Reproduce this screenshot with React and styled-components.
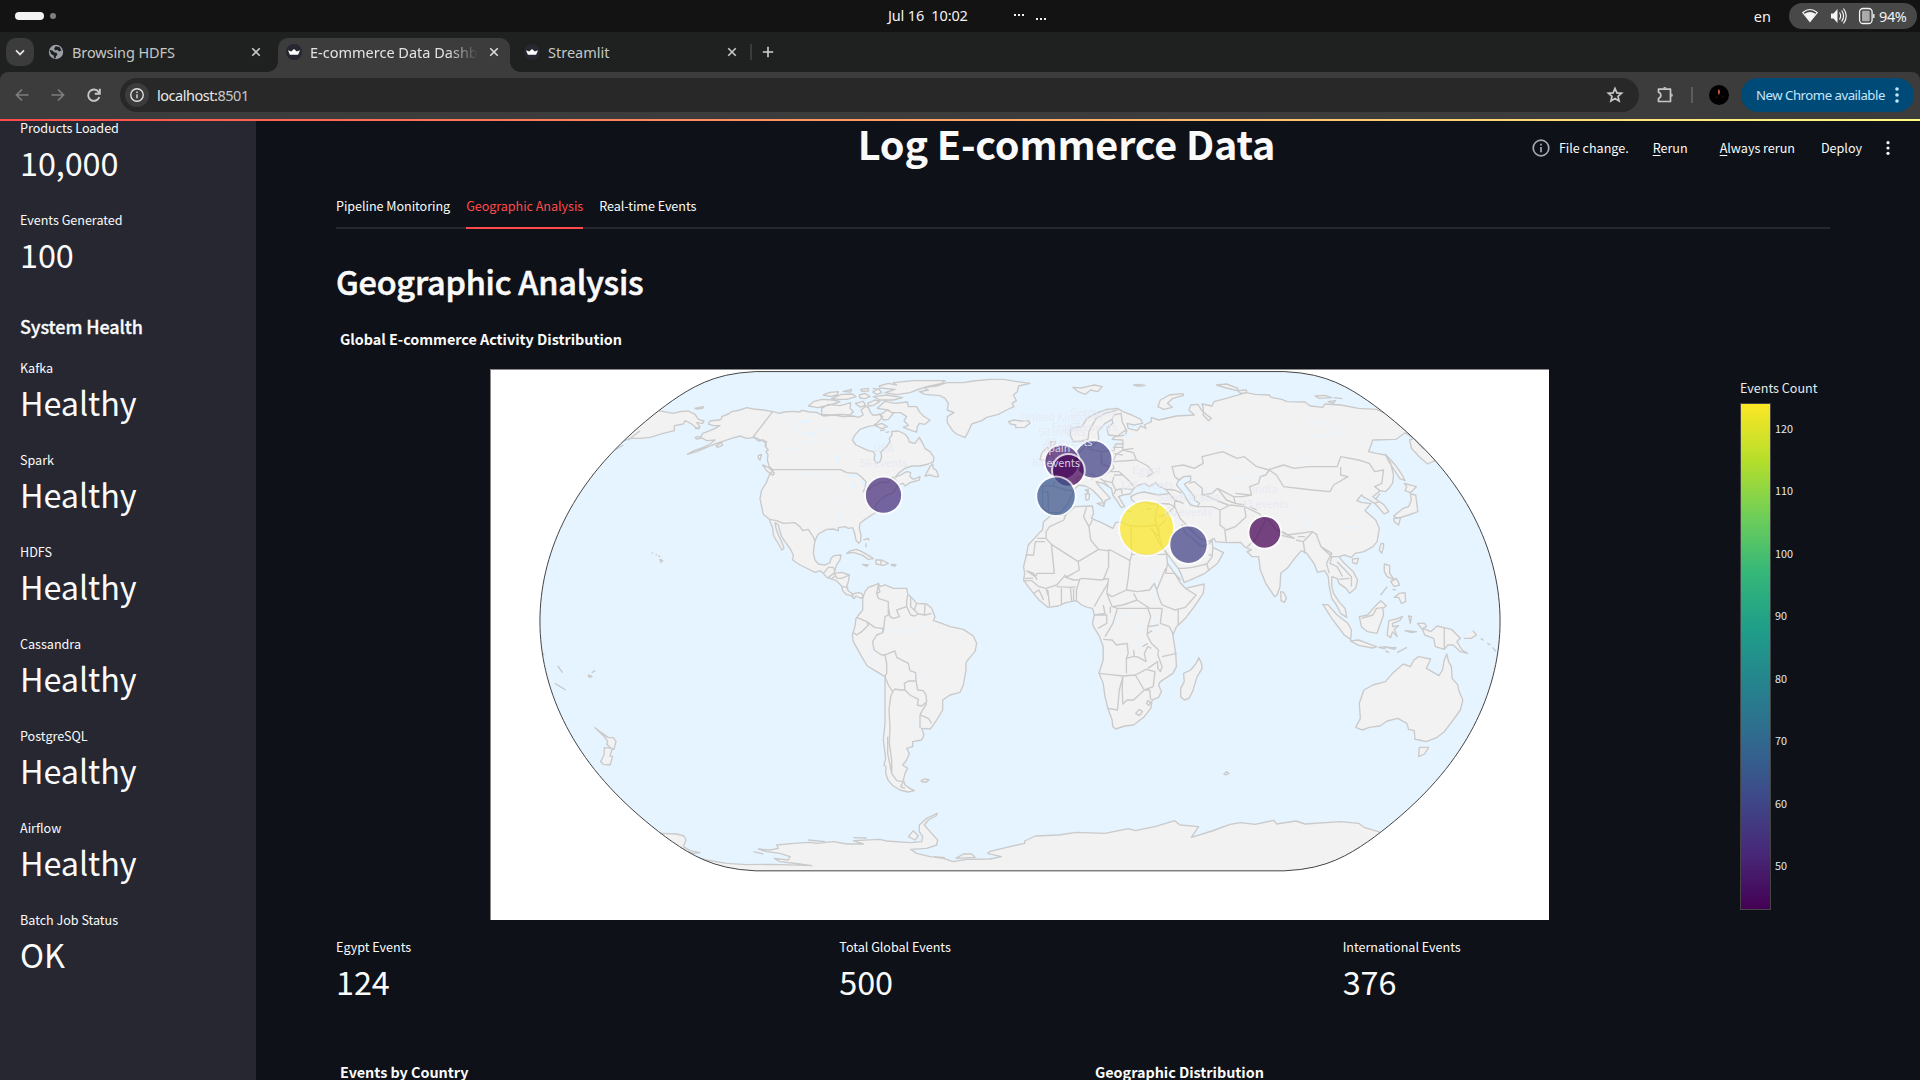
import React from "react";
import styled, { createGlobalStyle } from "styled-components";

const GlobalStyle = createGlobalStyle`
  * { box-sizing: border-box; }
  html, body { margin: 0; padding: 0; background: #0e1117; overflow: hidden; }
`;

const SOURCE = `"Noto Sans CJK JP", "Noto Sans CJK SC", "Noto Sans", sans-serif`;
const SYSTEM = `"Noto Sans", "Open Sans", sans-serif`;

/* ---------- window frame ---------- */

const Screen = styled.div`
  width: 1920px;
  height: 1080px;
  display: flex;
  flex-direction: column;
  overflow: hidden;
  background: #0e1117;
  color: #fafafa;
  font-family: ${SOURCE};
`;

const SystemBar = styled.header`
  flex: none;
  height: 32px;
  display: grid;
  grid-template-columns: 888px 1fr auto;
  align-items: center;
  background: #131313;
  color: #f2f2f2;
  font: 400 14.5px/32px ${SYSTEM};
`;

const Workspaces = styled.div`
  display: flex;
  align-items: center;
  gap: 6px;
  padding-left: 15px;
`;

const WorkspacePill = styled.span`
  width: ${(p) => (p.$active ? 29 : 6)}px;
  height: ${(p) => (p.$active ? 8 : 6)}px;
  border-radius: 4px;
  background: ${(p) => (p.$active ? "#f2f2f2" : "#808080")};
`;

const Clock = styled.div`
  display: flex;
  align-items: center;
  white-space: pre;
  height: 32px;
  padding-bottom: 3px;
  letter-spacing: -0.15px;
`;

const Dots = styled.svg`
  margin: 2px 0 0 46px;
`;

const StatusArea = styled.div`
  display: flex;
  align-items: center;
  gap: 18px;
  padding-right: 3px;
`;

const StatusPill = styled.div`
  width: 128px;
  height: 26px;
  border-radius: 13px;
  background: #484848;
  display: flex;
  align-items: center;
  padding-left: 13px;
  line-height: 26px;
  letter-spacing: -0.4px;
`;

const StatusIcons = styled.svg`
  margin-right: -13px;
`;

const TabStrip = styled.div`
  flex: none;
  height: 40px;
  display: flex;
  align-items: flex-end;
  background: #1f2120;
  font: 400 14.5px/28px ${SYSTEM};
`;

const TabSearch = styled.div`
  width: 28px;
  height: 28px;
  margin: 0 6px 6px;
  border-radius: 10px;
  background: #3c3c3c;
  display: grid;
  place-items: center;
`;

const Tab = styled.div`
  position: relative;
  width: 232px;
  height: 34px;
  margin-right: ${(p) => p.$gap || 0}px;
  padding: 0 8px 6px;
  display: flex;
  align-items: center;
  gap: 8px;
  border-radius: 10px 10px 0 0;
  background: ${(p) => (p.$active ? "#3c3c3c" : "transparent")};
  color: ${(p) => (p.$active ? "#e3e3e3" : "#c4c7c5")};

  &::before, &::after {
    content: "";
    display: ${(p) => (p.$active ? "block" : "none")};
    position: absolute;
    bottom: 0;
    width: 10px;
    height: 10px;
  }
  &::before {
    left: -10px;
    background: radial-gradient(circle at 0 0, transparent 9.5px, #3c3c3c 10px);
  }
  &::after {
    right: -10px;
    background: radial-gradient(circle at 100% 0, transparent 9.5px, #3c3c3c 10px);
  }
`;

const TabTitle = styled.span`
  flex: 1;
  overflow: hidden;
  white-space: nowrap;
  padding-bottom: 1px;
  letter-spacing: ${(p) => p.$spacing || 0}px;
  mask-image: ${(p) => (p.$fade ? "linear-gradient(90deg, #000 82%, transparent 100%)" : "none")};
`;

const StripDivider = styled.span`
  width: 2px;
  height: 16px;
  margin: 0 8px 12px 2px;
  background: #3c3c3c;
`;

const PlusBox = styled.span`
  height: 34px;
  padding-bottom: 6px;
  display: flex;
  align-items: center;
`;

const NavBar = styled.div`
  flex: none;
  height: 47px;
  background: #3c3c3c;
  border-radius: 8px 8px 0 0;
  box-shadow: 0 -8px 0 0 #1f2120;
  display: flex;
  align-items: center;
  padding: 0 6px 1px 12px;
  font: 400 14.5px/34px ${SYSTEM};
`;

const TabRow = styled.div`
  flex: none;
  position: relative;
  background: #1f2120;
  & > ${TabStrip} { position: relative; z-index: 1; }
  & > ${NavBar} { box-shadow: none; }
`;

const NavButtons = styled.div`
  width: 108px;
  display: flex;
  gap: 16px;
`;

const AddressBar = styled.div`
  width: 1519px;
  height: 34px;
  border-radius: 17px;
  background: #282828;
  display: flex;
  align-items: center;
  padding: 0 14px 0 5px;
  color: #c7c7c7;
`;

const InfoChip = styled.span`
  width: 24px;
  height: 24px;
  margin-right: 8px;
  border-radius: 50%;
  background: #3c3c3c;
  display: grid;
  place-items: center;
`;

const Url = styled.span`
  flex: 1;
  padding-bottom: 1px;
  letter-spacing: -0.47px;
  b { font-weight: 400; color: #e8e8e8; }
`;

const PuzzleIcon = styled.svg`
  margin-left: 16px;
`;

const BarDivider = styled.span`
  width: 2px;
  height: 16px;
  margin: 0 16px;
  background: #5c5c5c;
`;

const UpdateButton = styled.div`
  width: 173px;
  height: 34px;
  margin-left: auto;
  border-radius: 17px;
  background: #004a77;
  color: #c2e7ff;
  display: flex;
  align-items: center;
  justify-content: space-between;
  padding: 0 15px;
  font-size: 13.2px;
  letter-spacing: -0.48px;
`;

const Decoration = styled.div`
  flex: none;
  height: 2px;
  background: linear-gradient(90deg, #ff4b4b, #fffd80);
`;

/* ---------- app ---------- */

const AppBody = styled.div`
  position: relative;
  flex: 1;
  min-height: 0;
  display: flex;
  overflow: hidden;
`;

const Sidebar = styled.aside`
  width: 256px;
  flex: none;
  overflow: hidden;
  background: #262730;
  padding-left: 20px;
`;

const SidebarStack = styled.div`
  margin-top: -5px;
  display: flex;
  flex-direction: column;
  gap: 20px;
`;

const SidebarHeading = styled.h3`
  margin: 0;
  padding-top: 18px;
  height: 36px;
  font: 500 18px/16px ${SOURCE};
  letter-spacing: -0.12px;
  -webkit-text-stroke: 0.3px currentColor;
`;

const MetricBox = styled.div`
  height: 72px;
  white-space: nowrap;
`;

const MetricLabel = styled.div`
  font-size: 12.6px;
  line-height: 24px;
  letter-spacing: -0.02px;
`;

const MetricValue = styled.div`
  font-size: 32.4px;
  line-height: 44px;
  letter-spacing: -0.08px;
`;

const Main = styled.main`
  flex: 1;
  min-width: 0;
  padding: 0 90px 0 80px;
`;

const PageTitle = styled.h1`
  margin: 0;
  height: 60px;
  text-align: center;
  font: 700 39.6px/44px ${SOURCE};
  letter-spacing: -0.18px;
  text-indent: -33px;
`;

const Tabs = styled.nav`
  height: 48px;
  display: flex;
  gap: 16px;
  border-bottom: 2px solid #262730;
`;

const TabLabel = styled.span`
  height: 48px;
  padding-top: 13px;
  font-size: 12.6px;
  line-height: 24px;
  letter-spacing: -0.05px;
  color: ${(p) => (p.$active ? "#ff4b4b" : "#fafafa")};
  border-bottom: 2px solid ${(p) => (p.$active ? "#ff4b4b" : "transparent")};
`;

const Heading = styled.h2`
  margin: 30px 0 0;
  height: 48px;
  font: 500 32.4px/44px ${SOURCE};
  letter-spacing: -0.2px;
  -webkit-text-stroke: 0.6px currentColor;
`;

const ChartTitle = styled.div`
  padding-left: 4px;
  font: 700 14.4px/24px ${SOURCE};
  letter-spacing: -0.03px;
`;

const ChartTitleRow = styled.div`
  height: 62px;
  padding-top: 20px;
`;

const ChartRow = styled.div`
  height: 551px;
  padding-left: 154px;
  display: flex;
`;

const MapFrame = styled.svg`
  flex: none;
  display: block;
  background: #fff;
  border-top: 1px solid #8a8a8a;
  border-left: 1px solid #8a8a8a;
`;

const MarkerLabel = styled.text`
  font: 400 10.8px ${SOURCE};
  fill: #e6e8f2;
  fill-opacity: 0.88;
  text-anchor: middle;
`;

const Legend = styled.div`
  margin-left: 191px;
  padding-top: 7px;
`;

const LegendTitle = styled.div`
  font-size: 12.6px;
  line-height: 24px;
  height: 27px;
  color: #e6eaf1;
`;

const Scale = styled.div`
  display: flex;
  gap: 4px;
`;

const ScaleBar = styled.div`
  width: 31px;
  height: 507px;
  border: 1px solid #444;
  background: linear-gradient(to top, #440154 0%, #482878 11%, #3e4989 22%, #31688e 33%, #26828e 44%, #1f9e89 55.5%, #35b779 66.6%, #6ece58 77.7%, #b5de2b 88.8%, #fde725 100%);
`;

const ScaleTicks = styled.div`
  height: 451px;
  margin-top: 18px;
  display: flex;
  flex-direction: column;
  justify-content: space-between;
  font-size: 10.8px;
  line-height: 14px;
  color: #e6eaf1;
`;

const MetricRow = styled.div`
  display: grid;
  grid-template-columns: repeat(3, 1fr);
  gap: 16px;
  padding-top: 15px;
  height: 140px;
`;

const BottomRow = styled.div`
  display: grid;
  grid-template-columns: 1fr 1fr;
  gap: 16px;
`;

const AppToolbar = styled.div`
  position: absolute;
  top: 14px;
  right: 30px;
  height: 26px;
  display: flex;
  align-items: center;
  font-size: 12.6px;
  line-height: 26px;
  letter-spacing: -0.02px;
  u { text-underline-offset: 2px; }
`;

const ToolbarItem = styled.span`
  margin-left: ${(p) => p.$left}px;
`;

const ToolbarMenu = styled.span`
  display: flex;
  align-items: center;
  margin-left: 24px;
`;

/* ---------- icons ---------- */

const Stroke = ({ size = 20, color = "#c7c7c7", width = 1.7, children }) => (
  <svg width={size} height={size} viewBox="0 0 20 20" fill="none" stroke={color} strokeWidth={width}>
    {children}
  </svg>
);

const Close = ({ color = "#dcdcdc" }) => (
  <Stroke size={16} color={color} width={2}>
    <path d="M5.3 5.3l9.4 9.4M14.7 5.3l-9.4 9.4" />
  </Stroke>
);

const Globe = () => (
  <svg width="16" height="16" viewBox="0 0 16 16">
    <circle cx="8" cy="8" r="7.2" fill="#9aa0a6" />
    <path d="M1.500 6l3 .6 1.500 1.600 2.600.6.8 2-1.500 1.400-.3 2-1.500.2-.4-2.800L3 10zM7.500 2.200l4 .8 2 3.600-2.400.8-1.600-1.400-2.600.2-.8-1.500z" fill="#1f2120" />
  </svg>
);

const Crown = () => (
  <svg width="16" height="16" viewBox="0 0 16 16">
    <circle cx="8" cy="8" r="8" fill="#262730" />
    <path d="M2 6.200l3.200 1.300L8 5l2.800 2.500L14 6.200l-1.900 4.600H3.900z" fill="#fff" />
  </svg>
);

const InfoIcon = ({ size, color }) => (
  <Stroke size={size} color={color}>
    <circle cx="10" cy="10" r="7.800" />
    <path d="M10 9v5.200M10 5.700v1.900" />
  </Stroke>
);

const Kebab = ({ color, height = 18 }) => (
  <svg width="4" height={height} viewBox="0 0 4 18" fill={color}>
    <circle cx="2" cy="3" r="1.800" />
    <circle cx="2" cy="9" r="1.800" />
    <circle cx="2" cy="15" r="1.800" />
  </svg>
);

const Puzzle = () => (
  <PuzzleIcon width="20" height="20" viewBox="0 0 20 20" fill="none" stroke="#c7c7c7" strokeWidth="1.700">
    <path d="M3.500 4.200H15.500V16.500H3.500V13.500C6.600 12.500 6.600 8.200 3.500 7.200z" strokeLinejoin="round" />
    <path d="M8 3.600a1.800 1.600 0 0 1 3.600 0zM16.200 8.500a1.600 1.800 0 0 1 0 3.600z" fill="#c7c7c7" stroke="none" />
  </PuzzleIcon>
);

/* ---------- map ---------- */

const CENTER = { x: 1020, y: 621.2 };
const SCALE = 175.5;

function naturalEarth(lambda, phi) {
  const p2 = phi * phi;
  const p4 = p2 * p2;
  return [
    CENTER.x + SCALE * lambda * (0.8707 - 0.131979 * p2 + p4 * (-0.013791 + p4 * (0.003971 * p2 - 0.001529 * p4))),
    CENTER.y - SCALE * phi * (1.007226 + p2 * (0.015085 + p4 * (-0.044475 + 0.028874 * p2 - 0.005916 * p4))),
  ];
}

const sphere = (() => {
  const pts = [];
  for (let i = -90; i <= 90; i += 2) pts.push(naturalEarth(-Math.PI, (i * Math.PI) / 180));
  for (let i = 90; i >= -90; i -= 2) pts.push(naturalEarth(Math.PI, (i * Math.PI) / 180));
  return "M" + pts.map((p) => p.map((n) => n.toFixed(2)).join(",")).join("L") + "Z";
})();

const WEST_LAND = `
M725,170 L745,162 755,155 780,150 800,143 820,147 850,150 878,155 900,160 912,156 940,154 960,156 965,151 990,156 1010,157 1030,168 1060,165 1090,170 1120,168 1135,172 1150,165 1143,150 1155,140 1165,142 1170,155 1178,165 1190,165 1200,162 1208,170 1200,180 1190,190 1180,197 1165,199 1140,208 1125,225 1117,240 1128,255 1150,265 1165,272 1180,275 1185,285 1182,298 1190,310 1200,305 1205,290 1203,275 1218,262 1230,245 1228,235 1236,225 1235,215 1255,213 1275,222 1285,235 1288,246 1305,250 1318,232 1328,250 1335,265 1350,275 1362,292 1360,305 1345,312 1320,318 1295,318 1275,325 1255,340 1245,352 1262,345 1280,335 1292,337 1290,350 1300,358 1320,350 1318,360 1290,368 1275,378 1270,370 1262,372 1250,380 1240,398 1215,408 1195,425 1185,440 1192,455 1175,465 1150,482 1140,490 1138,505 1143,525 1142,543 1136,550 1128,540 1124,520 1118,503 1105,505 1095,500 1075,503 1075,512 1060,507 1040,508 1015,522 1005,542 1002,560 1000,580 1005,600 1015,612 1035,615 1050,608 1053,595 1062,587 1083,585 1080,600 1070,615 1065,630 1062,640 1085,637 1108,645 1105,665 1100,680 1105,692 1118,702 1135,698 1145,700 1150,712 1140,714 1128,708 1122,716 1112,706 1100,704 1088,692 1085,678 1070,663 1055,657 1040,652 1030,640 1020,632 1005,637 985,627 960,615 938,600 940,585 930,565 915,545 905,530 900,515 895,495 885,488 888,505 895,525 905,545 912,565 905,570 895,550 888,540 880,525 878,505 872,490 868,478 850,463 845,440 840,415 845,390 858,370 866,350 868,345 880,330 868,320 862,300 864,285 858,275 865,270 855,258 860,245 840,240 825,232 800,235 780,228 755,235 735,242 710,250 680,262 650,275 622,283 640,273 670,262 690,252 705,240 680,242 662,232 668,220 690,212 705,205 720,197 700,197 685,192 690,183 713,180 720,180 725,175z
M1100,580 L1112,572 1130,568 1150,577 1180,596 1165,598 1148,586 1120,577z
M1187,600 L1205,600 1225,610 1210,616 1188,612z
M1148,613 L1165,615 1160,619z M1234,613 L1248,614 1246,618 1235,617z
M1150,540 L1165,535 1167,542 M1158,550 L1158,562
M848,315 L865,322 883,340 878,346 860,332z M835,287 L845,283 840,300 835,295z
M1335,348 L1350,320 1358,312 1360,325 1370,332 1376,350 1365,350 1350,345z
M645,233 L655,229 662,235 650,237z M708,257 L725,248 728,256 712,262z
M645,145 L670,140 668,145 650,147z
M500,160 L535,152 580,160 600,155 625,153 645,163 655,178 672,183 668,190 650,188 660,200 650,205 635,192 615,182 610,192 583,197 583,212 550,220 510,232 480,235 450,235 430,243 380,240z
M445,240 L480,212 M405,270 L430,255
M645,206 L660,206
M1025,145 L1045,133 1080,137 1105,130 1112,128 1110,145 1120,155 1110,165 1080,163 1050,165 1025,163z
M985,138 L1000,125 1025,118 1060,120 1080,125 1060,132 1035,138 1015,143z
M1030,105 L1050,97 1075,95 1072,105 1050,109z M1090,94 L1115,88 1112,96z
M1055,115 L1085,103 1118,102 1128,110 1100,118 1075,118z
M1138,105 L1155,100 1170,110 1155,116 1140,114z M1142,88 L1165,85 1165,93 1145,94z
M1126,130 L1150,124 1157,136 1140,141z M1163,130 L1185,120 1200,124 1180,136 1165,138z
M1180,110 L1220,105 1268,113 1240,120 1200,120z M1178,96 L1195,86 1205,98 1190,103z M1178,85 L1195,88
M1198,78 L1225,70 1250,75 1240,68 1300,62 1395,62 1385,70 1340,80 1310,90 1290,98 1250,104 1215,98 1245,88 1200,84z
M1192,145 L1215,124 1245,130 1282,126 1285,140 1310,140 1318,155 1330,168 1350,180 1335,193 1318,190 1312,200 1310,216 1295,212 1270,202 1285,196 1272,182 1280,170 1262,158 1235,158 1225,150z
M1200,165 L1222,150 1240,160 1225,178 1210,180z
M1185,197 L1205,190 1222,200 1205,206z M1200,212 L1215,210 M1218,218 L1227,215
M1318,95 L1345,90 1330,83 1370,78 1400,68 1450,68 1480,63 1530,58 1570,58 1607,64 1650,70 1616,78 1612,95 1600,105 1609,122 1596,130 1602,140 1580,150 1555,163 1520,172 1505,182 1475,192 1465,215 1455,233 1430,222 1418,212 1402,188 1402,170 1422,158 1402,150 1405,130 1395,115 1380,107 1335,103z
M1148,715 L1155,695 1165,682 1185,675 1195,670 1200,680 1215,675 1240,685 1280,685 1283,702 1300,718 1310,730 1340,732 1355,745 1365,770 1360,782 1385,790 1410,800 1450,808 1480,828 1490,850 1485,875 1467,895 1458,908 1458,930 1450,975 1440,997 1410,1005 1388,1020 1388,1050 1370,1080 1358,1098 1350,1107 1325,1105 1332,1125 1325,1140 1298,1145 1298,1160 1280,1165 1288,1180 1280,1200 1268,1215 1283,1225 1275,1240 1270,1260 1275,1275 1290,1285 1303,1292 1285,1296 1260,1290 1240,1278 1225,1262 1217,1240 1218,1220 1212,1215 1217,1195 1210,1140 1215,1090 1215,950 1190,935 1162,918 1145,890 1120,845 1117,825 1125,800 1128,775 1148,750z
M1323,1262 L1335,1257 1347,1260 1340,1266 1327,1266z
M515,578 L519,580 M527,583 L531,586 M535,588 L541,590 M540,598 L548,602 542,607z
M233,918 L248,938 M225,970 L257,990 M325,945 L336,949 328,952z M335,938 L346,932 M190,880 L192,885
M345,1103 L360,1115 385,1133 400,1133 408,1145 402,1168 392,1165 380,1152 383,1145 375,1132z
M373,1163 L397,1165 390,1188 398,1190 390,1215 370,1213 362,1205 372,1185z
M500,1420 L545,1420 590,1422 612,1428 618,1440 610,1460 630,1472 660,1478 640,1480 600,1470 560,1500z
M600,1480 L680,1500 740,1510 800,1514 880,1513 995,1517 960,1512 900,1505 883,1495 925,1500 930,1490 900,1480 860,1475 835,1467 870,1470 895,1465 890,1455 940,1450 990,1447 1010,1450 1060,1445 1100,1452 1150,1452 1120,1442 1200,1438 1220,1443 1290,1448 1325,1445 1328,1430 1318,1415 1318,1395 1340,1375 1372,1360 1368,1368 1345,1380 1333,1395 1355,1420 1373,1440 1370,1455 1340,1465 1292,1468 1310,1480 1350,1490 1390,1495 1420,1505 1460,1498 1530,1497 1564,1490 1523,1480 1530,1474 1580,1462 1634,1450 1634,1443 1666,1428 1736,1425 1789,1417 1875,1420 1945,1406 1966,1412 2025,1400 2084,1382 2100,1395 2156,1400 2134,1432 2196,1413 2250,1393 2282,1388 2325,1393 2382,1381 2389,1392 2448,1383 2475,1392 2582,1385 2636,1390 2652,1402 2695,1415 2750,1440 2700,1600 600,1600z
M820,1475 L850,1482 M985,1440 L1035,1445 M1120,1433 L1160,1434 M1285,1430 L1300,1412 1315,1428 1305,1440z
M1428,1495 L1450,1482 1475,1482 1485,1492z M1362,1490 L1395,1493
`;

const WEST_BORDERS = `
M878,155 L820,230 835,243 850,240 860,258
M880,329 L1082,329 1100,338 1130,340 1145,352 1158,365 1155,385 1150,395 1165,388 1180,378 1200,368 1225,366 1238,352 1250,362
M868,478 L890,482 910,490 945,488 960,500 968,512 985,508 998,528 1005,542
M1030,640 L1045,622 1060,622 1064,632 M1045,652 L1062,640 M1055,655 L1068,648 M1062,640 L1072,655 1085,655 1108,645 M1085,680 L1105,682 M1118,702 L1118,712
M1203,600 L1203,616
M1195,672 L1190,700 1195,715 1225,725 1225,765 1215,770 1210,815
M1130,772 L1160,785 1165,795 1145,815 1130,825 1120,818 M1160,785 L1185,803 1208,805 1208,818 1190,825 1178,845 1182,870 1205,885 1215,885
M1215,885 L1245,873 1250,892 1285,910 1290,932 1307,938 1308,962 M1215,885 L1220,910 1220,940 1215,950
M1215,950 L1225,975 1238,995 1232,1010 1227,1050 1230,1100 1228,1150 1235,1200 1235,1240 1250,1262 1270,1265
M1238,995 L1245,987 1260,990 1275,990 L1273,970 1285,963 1308,963 1313,990 1330,992 1338,1005 1340,1025 1325,1038 1312,1035 1315,1018 1290,1005 1275,990
M1340,1030 L1325,1055 1320,1065 1320,1105 M1320,1065 L1345,1075 1355,1090
M1283,705 L1280,725 1280,740 1250,750 1258,770 1240,775 1230,770 1225,740 M1280,740 L1292,765 1303,768 1315,762 1335,765 1355,760
M1310,730 L1303,750 1315,762 M1335,735 L1333,765 M1292,712 L1292,740 1303,750
M1223,1130 L1223,1180 1235,1240 M1270,1265 L1262,1280 1275,1285
M1195,680 L1200,695 1192,700
`;

const EAST_LAND = `
M255,205 L285,200 300,175 325,160 355,148 385,145 400,155 425,165 450,178 455,190 430,195 412,190 415,205 440,212 450,198 465,205 460,195 480,185 480,172 500,180 550,168 600,165 585,150 590,135 610,133 620,150 635,165 648,175 640,182 625,165 625,145 622,132 650,138 655,125 690,115 745,98 770,103 810,105 815,112 845,118 860,125 910,126 925,138 960,142 965,132 1010,135 1060,145 1110,148 1130,158 1200,150 1290,220 1210,232 1190,218 1165,238 1100,240 1088,275 1110,280 1135,285 1150,310 1158,345 1155,370 1145,385 1135,395 1120,392 1100,410 1118,425 1130,433 1145,455 1132,462 1118,445 1105,430 1090,420 1075,412 1068,405 1055,422 1070,428 1095,430 1078,452 1108,480 1118,505 1112,545 1100,560 1075,575 1050,580 1040,592 1020,585 1005,590 1020,610 1045,635 1057,660 1052,685 1035,700 1025,685 1005,670 1000,655 985,650 985,680 990,700 1005,725 1022,745 1027,772 1010,760 998,735 985,715 978,680 975,650 965,632 945,637 935,610 915,580 900,572 885,590 860,625 842,640 840,680 832,705 825,710 800,670 785,630 780,590 762,590 748,575 760,570 740,560 730,547 690,548 660,545 655,535 640,545 615,535 600,520 580,500 565,495 575,520 600,540 622,560 640,552 650,542 652,562 682,578 665,610 630,640 572,668 562,640 555,625 530,590 510,560 505,540 500,520 495,500 490,475 495,450 500,430 480,432 460,425 440,432 425,420 422,410 440,400 460,396 500,405 530,400 520,388 500,378 492,368 475,380 460,370 445,375 430,385 425,395 420,402 400,405 388,410 405,440 395,442 385,425 372,405 368,385 345,370 325,365 335,380 365,415 350,422 348,435 340,418 315,390 295,378 275,375 262,392 258,405 240,440 225,458 195,458 175,445 175,400 175,378 205,378 215,350 200,340 230,330 245,310 270,295 280,275 290,265 298,245 312,245 308,268 340,275 375,272 380,252 400,252 400,240 370,238 378,230 410,225 408,210 385,228 360,225 355,205 372,190 370,178 350,190 330,215 333,235 320,255 305,262 300,240 285,245 262,245 252,225z
M200,465 L240,465 265,440 315,438 318,460 312,475 340,488 372,505 380,488 395,485 410,495 440,500 470,498 490,495 500,505 503,530 490,520 480,505 500,545 522,580 525,610 545,640 562,670 575,685 628,672 625,700 600,740 575,775 550,800 540,825 548,880 550,920 540,940 505,965 500,975 508,995 500,1012 482,1020 478,1045 460,1070 430,1095 405,1098 380,1107 372,1100 370,1080 358,1045 350,1010 345,970 333,940 345,900 345,860 335,830 318,800 315,790 320,765 315,745 300,742 285,735 270,722 240,728 220,738 190,742 165,720 150,700 135,680 122,660 125,640 122,620 130,585 135,555 165,520 175,510 178,485z
M80,185 L95,180 115,183 135,182 140,190 125,202 100,203 100,195 85,192z
M198,245 L212,245 205,260 220,275 235,300 230,318 203,320 210,300 200,285z M178,272 L190,262 195,280 185,302 168,298 172,282z
M260,82 L285,84 300,80 320,75 342,80 330,95 310,90 295,103 275,95z M430,75 L445,73 462,76 445,79z
M498,140 L505,120 530,105 568,101 570,106 540,115 525,130 538,142 515,148z
M662,75 L690,72 722,85 720,92 690,84z M722,92 L745,90 748,98 730,100z M938,108 L965,106 985,113 950,115z M990,113 L1015,116
M975,125 L995,122 990,130z
M1135,283 L1150,300 1165,318 1185,350 1190,362 1175,355 1160,330 1145,305z
M1203,240 L1215,235 1240,265 1300,290 1253,312 1230,290 1208,265z
M1188,370 L1222,380 1205,398 1190,392 1195,380z
M1205,402 L1220,405 1226,455 1200,465 1170,475 1158,468 1185,445 1200,440 1208,420z M1158,475 L1178,472 1172,495 1160,485z
M1122,552 L1130,550 1130,560 1125,580 1118,570z M1043,597 L1060,595 1055,612 1043,608z M842,695 L850,697 858,715 852,727 843,722z
M1132,612 L1147,617 1147,640 1160,660 1140,650 1132,635z M1122,705 L1140,680 M1150,665 L1165,655 1172,668 1175,675 1160,680z M1155,688 L1165,690
M1160,712 L1175,700 1190,698 1192,725 1180,730 1172,712z
M960,733 L975,735 1000,765 1030,790 1040,810 1038,838 1020,825 985,775z
M1037,843 L1060,840 1085,850 1110,860 1100,864 1060,856z
M1062,770 L1085,765 1105,740 1122,722 1138,737 1128,745 1130,765 1118,800 1112,820 1085,815 1068,800z
M1145,782 L1165,777 1183,770 1175,782 1155,790 1155,800 1172,797 1160,808 1168,830 1155,815 1150,833 1140,825z
M1116,862 L1138,860 1132,866z M1140,862 L1165,863 1160,868z M1168,878 L1195,862 M1135,873 L1146,877
M1200,768 L1208,770 1205,790z M1190,812 L1222,815 1208,818z
M1225,790 L1245,790 1250,800 1240,805 1262,815 1280,798 1320,808 1345,835 1335,845 1350,870 1365,880 1345,875 1325,855 1310,855 1300,868 1275,860 1270,835 1245,825 1240,810z
M1355,835 L1375,835 1390,825 1380,812 M1402,835 L1410,841 M1420,850 L1430,855 M1435,862 L1445,875
M1228,890 L1262,897 1250,925 1285,947 1295,930 1300,900 1307,882 1312,905 1320,920 1322,955 1338,975 1340,990 1352,1020 1345,1050 1325,1080 1300,1115 1280,1132 1250,1145 1230,1140 1218,1138 1216,1112 1200,1108 1195,1090 1170,1075 1140,1083 1120,1098 1090,1102 1070,1110 1052,1102 1065,1075 1062,1030 1075,990 1100,975 1135,965 1155,940 1185,912 1205,920 1215,900z
M1230,1162 L1256,1162 1245,1182 1228,1190z
M613,893 L620,910 622,925 608,950 595,995 585,1015 572,1020 562,1010 562,985 572,965 570,940 590,930 605,910z
M683,1242 L690,1235 697,1240 688,1245z
M295,390 L303,388 303,398z M295,402 L307,402 305,418 297,420z M328,430 L345,428 347,440z M410,453 L425,455 M465,448 L480,445
M610,897 L614,899
`;

const EAST_BORDERS = `
M240,465 L235,480 195,500 185,515 185,535 160,535 M128,585 L150,585 155,545 182,545 M185,535 L200,553 208,640 160,640 155,650 130,632
M200,553 L275,605 332,568 M298,442 L290,470 305,500 315,480 M305,500 L310,540 332,568 355,572 365,570 420,602
M422,498 L425,583 522,583 M425,583 L420,602 415,655 M275,605 L278,630 245,650 235,645 M275,660 L285,655 340,660 360,655 M360,570 L360,620 345,660
M360,655 L355,700 370,710 410,690 415,655 M410,690 L440,695 475,690 488,670 495,690 520,625 M520,640 L525,610 M520,640 L545,640 562,660
M495,690 L500,710 510,735 545,750 575,742 605,705 575,685 M555,750 L555,795 M475,745 L510,745 505,790 530,800 542,825
M355,700 L370,740 400,735 440,720 M430,700 L440,720 475,745 M358,670 L330,720 320,740 M345,735 L350,760 320,765 M365,740 L365,760
M320,765 L355,765 355,790 330,805 M370,740 L385,745 372,790 350,830 M385,745 L470,745 478,770 470,800 468,825 480,850
M345,838 L370,840 382,855 412,850 415,880 410,895 428,890 440,890 465,905 460,880 470,860 480,865 M470,800 L500,795 M480,850 L500,870 498,885 510,920 505,935 498,925 497,905 470,925
M410,895 L410,940 M333,940 L360,943 400,948 435,945 M400,950 L398,985 400,1032 412,1020 430,1020 460,990 M435,945 L460,990
M435,945 L465,928 490,935 485,980 460,990 475,990 478,1020 M550,880 L510,890 M358,1045 L385,1050 390,990 400,950 M470,1022 L478,1028 472,1036 466,1030z M436,1060 L446,1048 455,1055 446,1067z
M455,860 L470,850 M430,870 L432,890 M468,800 L478,800 M470,820 L482,812
M130,632 L150,640 160,660 M122,662 L145,662 165,680 185,685 190,705 M125,655 L148,655 M185,685 L215,675 235,650 262,660 275,660
M215,680 L255,682 268,680 M190,690 L195,740 M228,685 L228,735 M253,682 L257,725 M262,685 L262,725 M270,725 L270,690 280,655 M150,700 L165,690 178,720
M262,245 L302,240 305,215 325,175 350,160 385,150 M370,178 L375,165 395,160 398,185 412,215 M400,252 L400,270 430,265 M372,262 L400,262 M375,280 L400,285 M370,310 L380,285 400,270 M400,270 L430,278 438,300 375,305
M438,300 L470,318 485,338 468,350 M370,310 L375,325 350,345 M375,345 L400,345 415,360 430,378 M400,345 L390,335 365,335 M340,275 L340,310 365,322 M350,345 L330,350 310,360 M330,350 L345,362 370,368 375,350 M345,362 L360,380 M370,368 L380,390 400,385 425,388 M380,390 L375,402 M395,385 L398,402
M310,340 L325,350 M275,375 L270,355 290,345 M205,378 L240,390 258,392 M178,395 L190,395 192,450
M560,362 L545,350 538,320 570,315 600,325 625,310 622,290 680,275 720,295 740,290 775,320 810,330 800,345 785,350 780,370 755,380 760,405 735,410 710,410 665,385 650,400 622,405 622,385 600,365 585,370
M805,330 L850,315 880,325 920,320 1000,320 1010,290 1060,300 1090,310 1105,335 1130,330 1125,370 1105,380 1120,392
M810,330 L830,345 850,380 930,390 980,395 990,375 1030,350 1010,345 1010,320
M530,400 L545,420 545,440 560,475 600,520 M500,430 L530,432 545,440 M520,388 L545,390 565,400 M545,420 L570,430
M608,440 L650,440 672,450 700,435 740,440 745,470 715,500 690,510 672,495 672,450 M685,510 L690,548 M620,400 L660,420 695,435 M665,385 L690,420 715,430 M710,410 L715,430 740,435 M715,400 L755,405 M740,440 L780,460 800,480 770,540 748,560
M755,440 L775,450 M800,470 L830,510 860,525 930,515 945,525 M835,508 L880,535 840,525 M885,540 L905,545 910,580 M890,530 L910,530 M905,545 L932,515 M940,520 L955,560 985,580 970,610 978,640 M955,560 L985,590 1010,590 M985,590 L980,610 1000,620 1015,650 M1000,605 L1040,650 1040,680 M1005,658 L1035,655
M555,625 L572,625 595,622 635,612 650,590 652,562 M635,612 L640,630 M498,470 L520,465 545,440 M500,500 L520,480 M640,585 L650,585
M1068,775 L1100,765 1110,745 1128,743 M1300,804 L1300,867 M1105,430 L1118,425 M1108,418 L1120,400
`;

const CASPIAN = "M555,362 L570,350 590,348 590,362 572,372 585,390 600,410 600,420 615,430 608,440 590,435 580,420 570,400 550,375z";

const LAKES_WEST = `M1098,346 L1120,343 1140,350 1115,353z M1115,392 L1118,374 1128,368 1122,386z M1145,362 L1158,364 1155,380 1148,372z M960,187 L975,180 1000,182 975,189z M978,224 L1010,219 990,226z M1066,285 L1074,283 1078,310 1070,302z M1058,262 L1066,255`;
const RIVERS_WEST = `M905,165 L925,180 945,195 955,215 980,222 1010,215 1040,210 M905,268 L940,265 970,245 1030,240 M948,365 L960,345 1000,338 1030,345 1030,370 1050,400 1088,438 1075,480 1065,505 M1210,820 L1240,808 1265,820 1310,808 1365,785 M1175,845 L1172,890 1198,918 M1322,920 L1312,960 1315,1030 1302,1090 1318,1103`;
const RIVERS_EAST = `M605,180 L615,200 640,215 655,250 700,260 715,275 M920,140 L930,160 925,180 1005,215 980,225 925,228 M910,260 L915,290 895,310 M725,355 L775,352 M480,585 L478,610 490,640 488,700 485,740 490,790 M350,835 L370,800 385,770 410,762 440,785 452,835 445,885 M960,560 L940,525 905,465 880,462 M1000,520 L1020,505 1075,502 M985,600 L1025,620 1032,690 M350,195 L335,215 M325,170 L330,165 M415,230 L432,220`;
const LAKES_EAST = `M405,226 L415,222 420,230 410,234z M428,218 L436,216 438,222z M486,796 L498,794 496,806 488,806z M622,383 L630,380 632,392 624,392z`;

const MARKERS = [
  { name: "USA", events: 56, x: 883.5, y: 495.2, r: 18.6, fill: "#472d7b", label: 452.3 },
  { name: "Germany", events: 60, x: 1093.3, y: 459.5, r: 19.2, fill: "#424086", label: 416.2 },
  { name: "United Kingdom", events: 50, x: 1062, y: 462, r: 17.6, fill: "#481a6c", label: 421 },
  { name: "France", events: 43, x: 1068.4, y: 470.4, r: 16.4, fill: "#440154", label: 430.7 },
  { name: "Spain", events: 64, x: 1056, y: 496.3, r: 19.8, fill: "#3a538b", label: 452 },
  { name: "Egypt", events: 124, x: 1146.6, y: 528.2, r: 27.6, fill: "#fde725", label: 474 },
  { name: "Saudi Arabia", events: 60, x: 1188.5, y: 544.7, r: 19.2, fill: "#424086", label: 501.3 },
  { name: "India", events: 43, x: 1264.8, y: 532.4, r: 16.4, fill: "#440154", label: 493 },
];

const line = { fill: "none", vectorEffect: "non-scaling-stroke", strokeLinejoin: "round" };

function Region({ transform, land, borders, lakes, rivers, children }) {
  return (
    <g transform={transform}>
      <path d={land} {...line} fill="#f2f2f2" stroke="#cacaca" strokeWidth="1.35" />
      <path d={lakes} {...line} fill="#e6f4ff" stroke="#e6f4ff" strokeWidth="1" />
      <path d={rivers} {...line} stroke="#e6f4ff" strokeWidth="1" />
      {children}
      <path d={borders} {...line} stroke="#cacaca" strokeWidth="1.35" />
    </g>
  );
}

function WorldMap() {
  return (
    <MapFrame width="1059" height="551" viewBox="491 370 1058 550">
      <clipPath id="globe">
        <path d={sphere} />
      </clipPath>
      <path d={sphere} fill="#e6f4ff" />
      <g clipPath="url(#globe)">
        <Region transform="translate(480 360) scale(0.33333)" land={WEST_LAND} borders={WEST_BORDERS} lakes={LAKES_WEST} rivers={RIVERS_WEST} />
        <Region transform="translate(980 360) scale(0.357143 0.33333)" land={EAST_LAND} borders={EAST_BORDERS} lakes={LAKES_EAST} rivers={RIVERS_EAST}>
          <path d={CASPIAN} {...line} fill="#e6f4ff" stroke="#cacaca" strokeWidth="1.35" />
        </Region>
      </g>
      <path d={sphere} fill="none" stroke="#444" strokeWidth="1" />
      {MARKERS.map((m) => (
        <circle key={m.name} cx={m.x} cy={m.y} r={m.r} fill={m.fill} stroke="#fff" strokeWidth="2" opacity="0.72" />
      ))}
      {MARKERS.map((m) => (
        <g key={m.name}>
          <MarkerLabel x={m.x} y={m.label}>{m.name}</MarkerLabel>
          <MarkerLabel x={m.x} y={m.label + 15}>{m.events} events</MarkerLabel>
        </g>
      ))}
    </MapFrame>
  );
}

function Metric({ label, value }) {
  return (
    <MetricBox>
      <MetricLabel>{label}</MetricLabel>
      <MetricValue>{value}</MetricValue>
    </MetricBox>
  );
}

const SERVICES = ["Kafka", "Spark", "HDFS", "Cassandra", "PostgreSQL", "Airflow"];
const TICKS = [120, 110, 100, 90, 80, 70, 60, 50];

export default function App() {
  return (
    <Screen>
      <GlobalStyle />
      <SystemBar>
        <Workspaces>
          <WorkspacePill $active />
          <WorkspacePill />
        </Workspaces>
        <Clock>
          Jul 16  10:02
          <Dots width="34" height="12" viewBox="0 0 34 12" fill="#f2f2f2">
            <path d="M0 4h2v2h-2zM4 4h2v2h-2zM8 4h2v2h-2zM22 8h2v2h-2zM26 8h2v2h-2zM30 8h2v2h-2z" />
          </Dots>
        </Clock>
        <StatusArea>
          <span>en</span>
          <StatusPill>
            <StatusIcons width="90" height="20" viewBox="0 0 90 20" fill="none" stroke="#f5f5f5">
              <path d="M0.800 6.500Q8 0.500 15.200 6.500L8 15.500z" strokeWidth="1.200" />
              <path d="M2.200 8Q8 4 13.800 8L8 15.500z" fill="#f5f5f5" stroke="none" />
              <path d="M29 7.500h2.500l4-4.500v14l-4-4.500H29z" fill="#f5f5f5" stroke="none" />
              <path d="M37.500 6.500q2.300 3.500 0 7M39.600 4.500q4 5.500 0 11M41.500 2.500q5.500 7.500 0 15" strokeWidth="1.200" />
              <rect x="57.600" y="2.500" width="12.500" height="15" rx="3.500" strokeWidth="1.300" />
              <rect x="60" y="4.700" width="7.700" height="10.600" rx="1" fill="#aaa" stroke="none" />
              <path d="M71.800 8v4" strokeWidth="1.300" />
            </StatusIcons>
            94%
          </StatusPill>
        </StatusArea>
      </SystemBar>

      <TabRow>
        <TabStrip>
          <TabSearch>
            <Stroke size={16} color="#e3e3e3" width={2.2}><path d="M5 8l5 5 5-5" /></Stroke>
          </TabSearch>
          <Tab $gap={6}>
            <Globe />
            <TabTitle $spacing={-0.1}>Browsing HDFS</TabTitle>
            <Close color="#c7c7c7" />
          </Tab>
          <Tab $active $gap={6}>
            <Crown />
            <TabTitle $fade>E-commerce Data Dashboard</TabTitle>
            <Close />
          </Tab>
          <Tab>
            <Crown />
            <TabTitle>Streamlit</TabTitle>
            <Close color="#c7c7c7" />
          </Tab>
          <StripDivider />
          <PlusBox>
            <Stroke size={16} color="#d0d0d0" width={2}><path d="M10 3.500v13M3.500 10h13" /></Stroke>
          </PlusBox>
        </TabStrip>

        <NavBar>
          <NavButtons>
            <Stroke color="#7e7e7e"><path d="M16.500 10H4.500M10 4.500L4.500 10l5.500 5.500" /></Stroke>
            <Stroke color="#7e7e7e"><path d="M3.500 10h12M10 4.500l5.500 5.500-5.500 5.500" /></Stroke>
            <Stroke width={1.9}><path d="M15.300 12a5.700 5.700 0 1 1-.8-5.200L15.500 8.500M15.800 3.800v5h-5" /></Stroke>
          </NavButtons>
          <AddressBar>
            <InfoChip><InfoIcon size={16} color="#e3e3e3" /></InfoChip>
            <Url><b>localhost:</b>8501</Url>
            <Stroke><path d="M10 3.500l1.900 4.400 4.700.4-3.600 3.100 1.100 4.600L10 13.500 5.900 16 7 11.400 3.400 8.300l4.700-.4z" /></Stroke>
          </AddressBar>
          <Puzzle />
          <BarDivider />
          <svg width="20" height="20" viewBox="0 0 20 20">
            <circle cx="10" cy="10" r="10" fill="#000" />
            <path d="M9 4.500q2.500 0 2 3l-1 2.500-1-1z" fill="#b5533c" />
            <path d="M6.500 12l1.500-.5.500 1.500zM13 11l1.500 1-.5 1z" fill="#5a2a18" />
          </svg>
          <UpdateButton>
            New Chrome available
            <Kebab color="#c2e7ff" />
          </UpdateButton>
        </NavBar>
      </TabRow>
      <Decoration />

      <AppBody>
        <Sidebar>
          <SidebarStack>
            <Metric label="Products Loaded" value="10,000" />
            <Metric label="Events Generated" value="100" />
            <SidebarHeading>System Health</SidebarHeading>
            {SERVICES.map((s) => <Metric key={s} label={s} value="Healthy" />)}
            <Metric label="Batch Job Status" value="OK" />
          </SidebarStack>
        </Sidebar>
        <Main>
          <PageTitle>Log E-commerce Data</PageTitle>
          <Tabs>
            <TabLabel>Pipeline Monitoring</TabLabel>
            <TabLabel $active>Geographic Analysis</TabLabel>
            <TabLabel>Real-time Events</TabLabel>
          </Tabs>
          <Heading>Geographic Analysis</Heading>
          <ChartTitleRow>
            <ChartTitle>Global E-commerce Activity Distribution</ChartTitle>
          </ChartTitleRow>
          <ChartRow>
            <WorldMap />
            <Legend>
              <LegendTitle>Events Count</LegendTitle>
              <Scale>
                <ScaleBar />
                <ScaleTicks>{TICKS.map((t) => <span key={t}>{t}</span>)}</ScaleTicks>
              </Scale>
            </Legend>
          </ChartRow>
          <MetricRow>
            <Metric label="Egypt Events" value="124" />
            <Metric label="Total Global Events" value="500" />
            <Metric label="International Events" value="376" />
          </MetricRow>
          <BottomRow>
            <ChartTitle>Events by Country</ChartTitle>
            <ChartTitle>Geographic Distribution</ChartTitle>
          </BottomRow>
        </Main>
        <AppToolbar>
          <InfoIcon size={20} color="#a3a8b4" />
          <ToolbarItem $left={8}>File change.</ToolbarItem>
          <ToolbarItem $left={24}><u>R</u>erun</ToolbarItem>
          <ToolbarItem $left={32}><u>A</u>lways rerun</ToolbarItem>
          <ToolbarItem $left={26}>Deploy</ToolbarItem>
          <ToolbarMenu><Kebab color="#fafafa" height={16} /></ToolbarMenu>
        </AppToolbar>
      </AppBody>
    </Screen>
  );
}
